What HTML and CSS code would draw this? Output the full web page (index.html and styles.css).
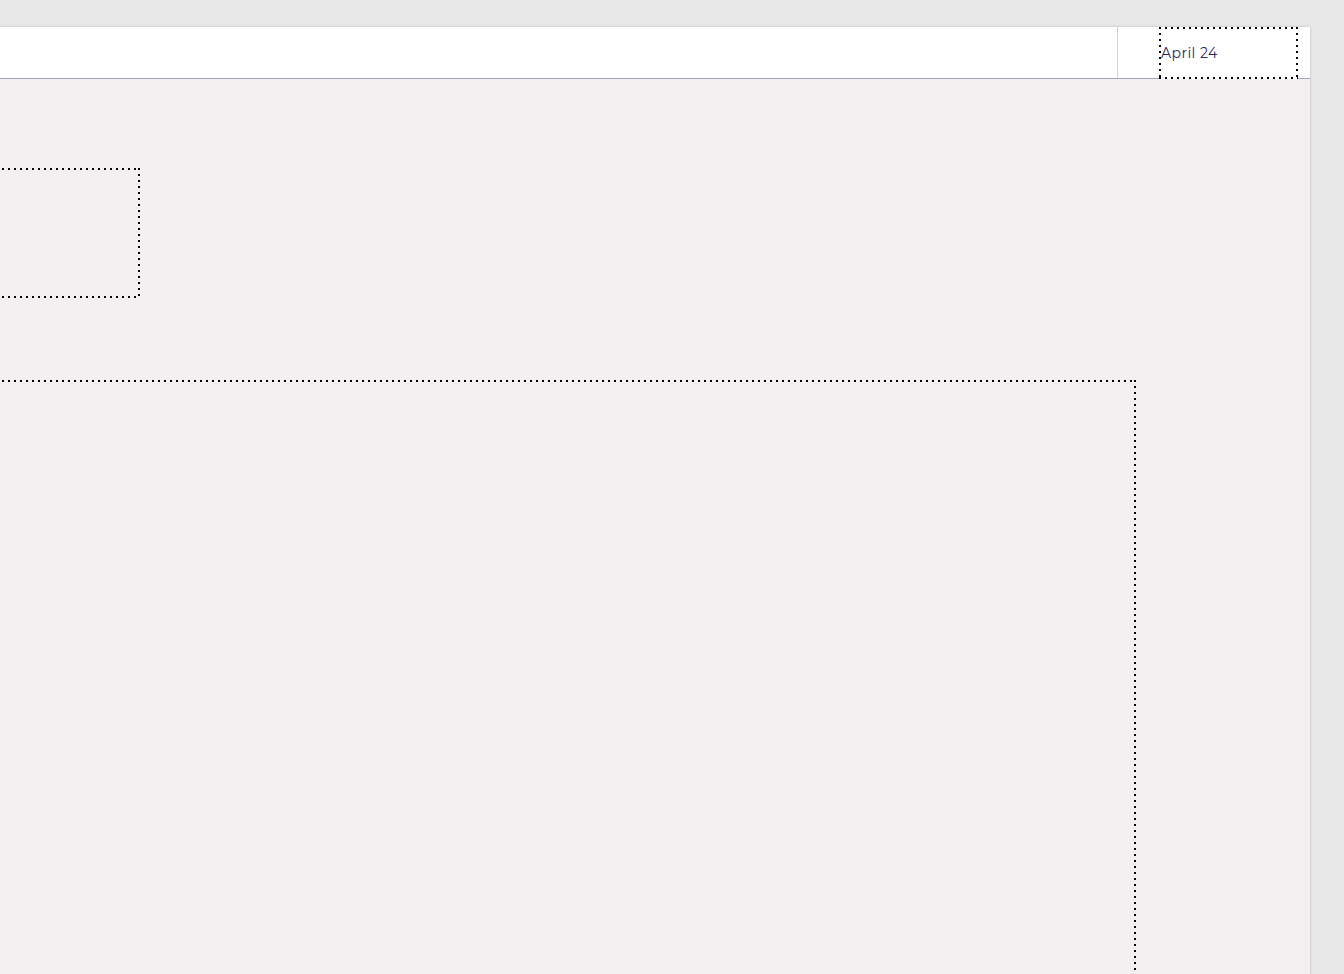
FILE: index.html
```html
<!DOCTYPE html>
<html lang="en">
<head>
<meta charset="utf-8">
<title>Schedule</title>
<link rel="stylesheet" href="styles.css">
</head>
<body>
<div class="page">
  <header class="topbar">
    <div class="topbar-main"></div>
    <div class="divider"></div>
    <div class="date-box dotted"><span class="date-text">April 24</span></div>
  </header>
  <main class="content">
    <section class="block block-small dotted"></section>
    <section class="block block-large dotted"></section>
  </main>
</div>
</body>
</html>
```
FILE: styles.css
```css
html, body {
  margin: 0;
  padding: 0;
  height: 100%;
  overflow: hidden;
}
body {
  background: #e8e8e8;
  font-family: "Montserrat", "Inter", "Open Sans", sans-serif;
}
.page {
  margin-top: 27px;
  margin-left: -300px;
  width: 1610px;
  height: 1200px;
  background: #f1eff0;
  box-shadow: 0 0 3px rgba(0, 0, 0, 0.18);
  display: flex;
  flex-direction: column;
}
.topbar {
  height: 52px;
  background: #ffffff;
  box-shadow: inset 0 -1px 0 #a7a4bf;
  display: flex;
  align-items: stretch;
  flex: none;
}
.topbar-main {
  flex: 1;
}
.divider {
  width: 1px;
  height: 51px;
  background: #d3d2da;
  margin-right: 41px;
}
.dotted {
  box-sizing: border-box;
  background-image:
    repeating-linear-gradient(to right, #000 0 2px, transparent 2px 6px),
    repeating-linear-gradient(to right, #000 0 2px, transparent 2px 6px),
    repeating-linear-gradient(to bottom, #000 0 2px, transparent 2px 6px),
    repeating-linear-gradient(to bottom, #000 0 2px, transparent 2px 6px);
  background-size: 100% 2px, 100% 2px, 2px 100%, 2px 100%;
  background-position: left top, left bottom, left top, right top;
  background-repeat: no-repeat;
}
.date-box {
  width: 139px;
  height: 52px;
  background-color: #fff;
  display: flex;
  align-items: center;
  padding-left: 2px;
  margin-right: 12px;
}
.date-text {
  font-size: 14px;
  color: #2a2756;
  letter-spacing: 0.45px;
}
.content {
  padding-left: 200px;
  padding-top: 89px;
  display: flex;
  flex-direction: column;
  gap: 82px;
}
.block-small {
  width: 240px;
  height: 130px;
}
.block-large {
  width: 1236px;
  height: 700px;
}
```
